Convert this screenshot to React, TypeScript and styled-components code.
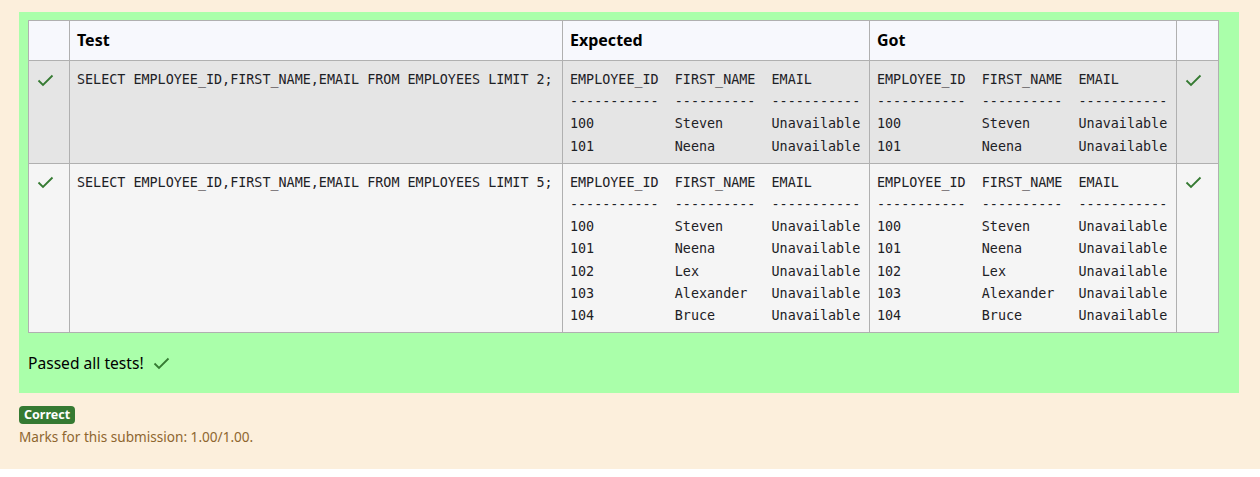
import React from "react";
import styled, { createGlobalStyle } from "styled-components";

const Global = createGlobalStyle`
  html, body { margin: 0; padding: 0; background: #ffffff; }
  body { font-family: "Noto Sans", "Open Sans", sans-serif; color: #1d2125; }
`;

const Page = styled.div`
  background: #fcefdc;
  padding: 12px 21px 22px 19px;
  display: flex;
  flex-direction: column;
  align-items: flex-start;
`;

const ResultBox = styled.div`
  align-self: stretch;
  background: #aaffaa;
  padding: 8px 9px 18px 9px;
`;

const Table = styled.table`
  border-collapse: collapse;
  table-layout: fixed;
  width: 1190px;
`;

const HeadCell = styled.th<{ $w: number }>`
  box-sizing: border-box;
  width: ${(p) => p.$w}px;
  background: #f7f8fd;
  border: 1px solid #b0b0b0;
  padding: 8px 7px;
  text-align: left;
  font-size: 16px;
  line-height: 23px;
  font-weight: 700;
  color: #000;
`;

const Row = styled.tr<{ $odd: boolean }>`
  background: ${(p) => (p.$odd ? "#e5e5e5" : "#f5f5f5")};
`;

const Cell = styled.td`
  border: 1px solid #b0b0b0;
  padding: 8px 7px 5px 7px;
  vertical-align: top;
`;

const Mono = styled.pre`
  margin: 0;
  font-family: "DejaVu Sans Mono", "Liberation Mono", monospace;
  font-size: 13.4px;
  line-height: 22.2px;
  color: #1d2125;
  white-space: pre;
  overflow: hidden;
`;

const IconWrap = styled.span`
  display: flex;
  align-items: center;
  height: 22.2px;
  padding-left: 1px;
`;

const Passed = styled.p`
  margin: 18px 0 0 0;
  font-size: 15.6px;
  line-height: 24px;
  color: #000;
  display: flex;
  align-items: center;
  gap: 9px;
`;

const Badge = styled.span`
  margin-top: 13px;
  background: #357a32;
  color: #fff;
  font-weight: 700;
  font-size: 12.5px;
  line-height: 18px;
  padding: 0 5px;
  border-radius: 4px;
`;

const Marks = styled.div`
  margin-top: 3px;
  font-size: 13.6px;
  line-height: 20px;
  color: #8e662f;
`;

const Check = () => (
  <svg width="17" height="13" viewBox="0 0 17 13">
    <polyline points="1.5,6.5 6,11 15.5,1.5" fill="none" stroke="#357a32" strokeWidth="1.8" />
  </svg>
);

const header = "EMPLOYEE_ID  FIRST_NAME  EMAIL\n-----------  ----------  -----------";
const people: [string, string][] = [
  ["100", "Steven"],
  ["101", "Neena"],
  ["102", "Lex"],
  ["103", "Alexander"],
  ["104", "Bruce"],
];
const outFor = (n: number) =>
  header +
  "\n" +
  people
    .slice(0, n)
    .map(([id, name]) => id.padEnd(13) + name.padEnd(12) + "Unavailable")
    .join("\n");

const tests = [2, 5];

export default function App() {
  return (
    <>
      <Global />
      <Page>
        <ResultBox>
          <Table>
            <thead>
              <tr>
                <HeadCell $w={41}></HeadCell>
                <HeadCell $w={493}>Test</HeadCell>
                <HeadCell $w={307}>Expected</HeadCell>
                <HeadCell $w={307}>Got</HeadCell>
                <HeadCell $w={42}></HeadCell>
              </tr>
            </thead>
            <tbody>
              {tests.map((n, i) => (
                <Row key={n} $odd={i === 0}>
                  <Cell>
                    <IconWrap>
                      <Check />
                    </IconWrap>
                  </Cell>
                  <Cell>
                    <Mono>{`SELECT EMPLOYEE_ID,FIRST_NAME,EMAIL FROM EMPLOYEES LIMIT ${n};`}</Mono>
                  </Cell>
                  <Cell>
                    <Mono>{outFor(n)}</Mono>
                  </Cell>
                  <Cell>
                    <Mono>{outFor(n)}</Mono>
                  </Cell>
                  <Cell>
                    <IconWrap>
                      <Check />
                    </IconWrap>
                  </Cell>
                </Row>
              ))}
            </tbody>
          </Table>
          <Passed>
            Passed all tests! <Check />
          </Passed>
        </ResultBox>
        <Badge>Correct</Badge>
        <Marks>Marks for this submission: 1.00/1.00.</Marks>
      </Page>
    </>
  );
}
